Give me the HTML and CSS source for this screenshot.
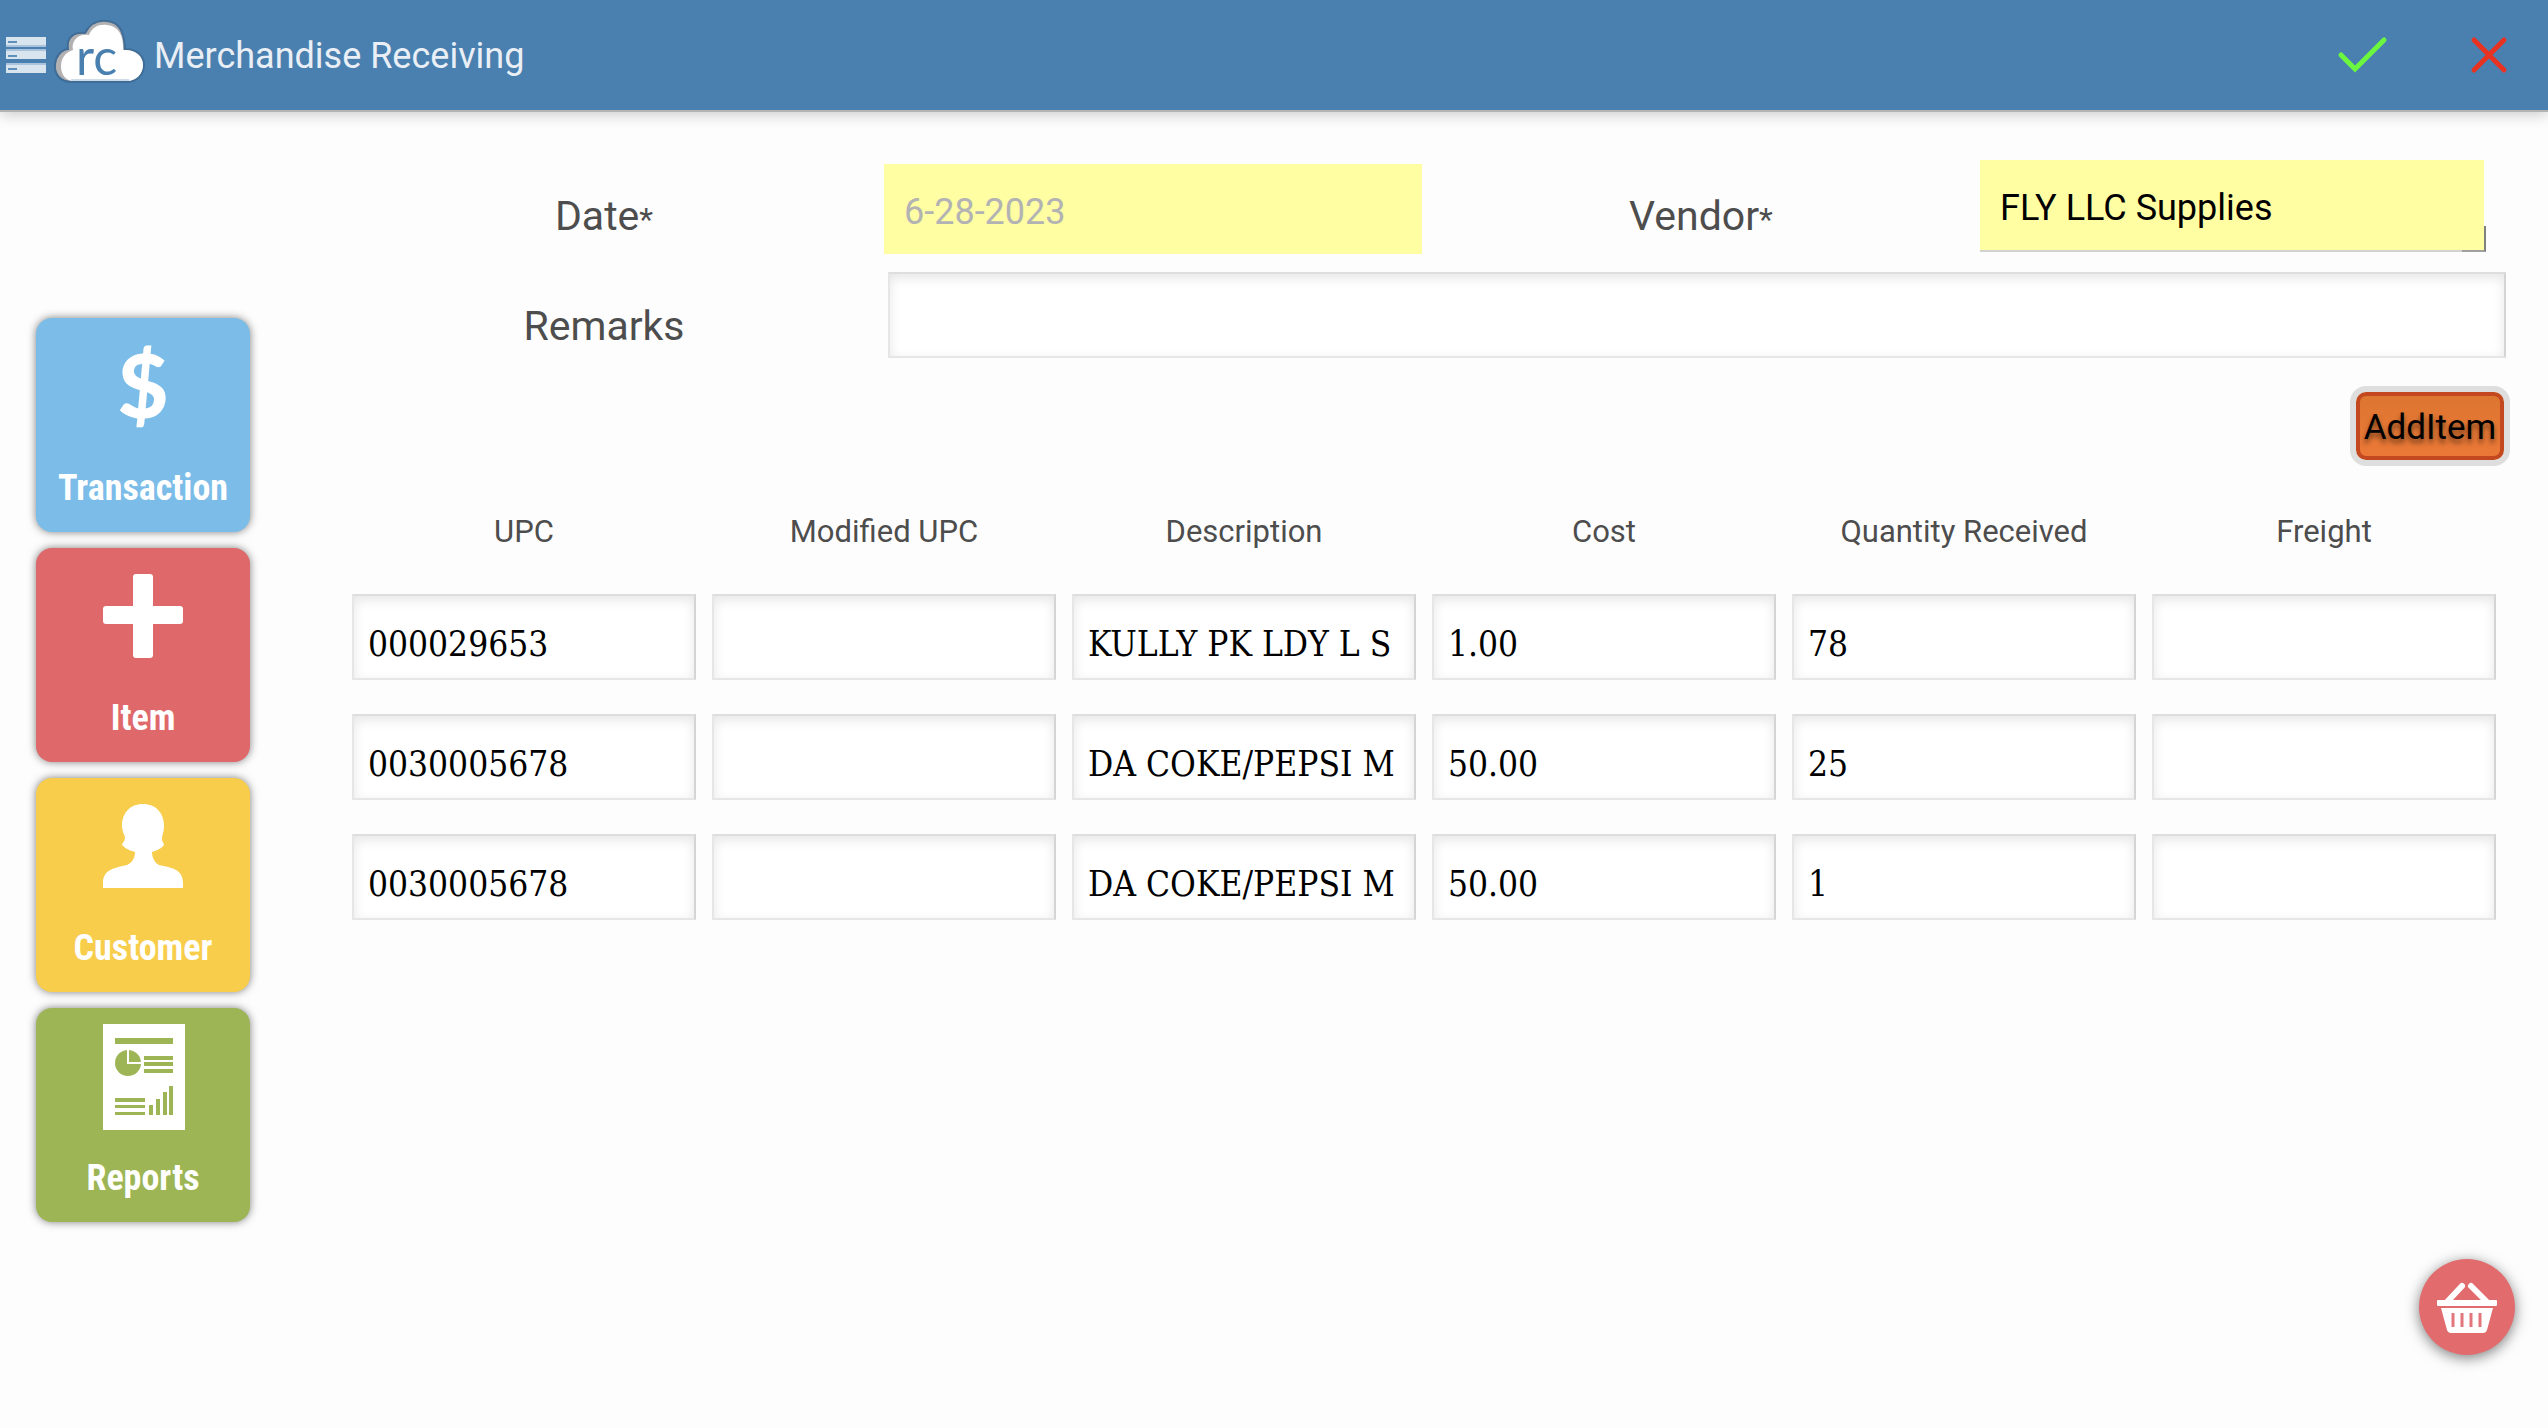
FILE: index.html
```html
<!DOCTYPE html>
<html lang="en">
<head>
<meta charset="utf-8">
<meta name="viewport" content="width=device-width, initial-scale=1">
<title>Merchandise Receiving</title>
<link rel="stylesheet" href="styles.css">
</head>
<body>
<header class="topbar">
  <button class="menu-button" type="button" aria-label="Menu">
    <svg width="40" height="36" viewBox="0 0 40 36" aria-hidden="true">
      <path fill="#a9c3dc" d="M0 8h40v2H0zM0 12h40v2H0zM0 26h40v2H0z"/>
      <path fill="#d8e5ef" d="M0 0h40v8H0zM0 14h40v8H0zM0 28h40v8H0z"/>
      <path fill="#5f90bc" d="M2 4h9v2H2zM2 18h9v2H2zM2 31h9v2H2z"/>
    </svg>
  </button>
  <svg class="logo" width="96" height="68" viewBox="0 0 96 68" role="img" aria-label="rc">
    <path fill="#b3b0b2" stroke="#3f6d97" stroke-width="2" d="M20 65C8 65 2 57 3 47c1-8 6-14 13-15C14 20 22 15 33 16 38 6 47 3 55 4c11 1 17 8 18 28 12 0 19 7 19 16 0 10-8 17-17 17z"/>
    <path fill="#fff" d="M22 64C13 64 9 57 9 49c0-8 5-14 12-16-2-9 5-17 16-15C40 10 47 7 55 8c11 1 17 10 16 25 12-1 20 6 20 15 0 9-7 16-16 16z"/>
    <path fill="#cfdce8" d="M19 62h58v2H19z"/>
    <text class="logo-text" x="24" y="58">rc</text>
  </svg>
  <h1 class="title">Merchandise Receiving</h1>
  <div class="topbar-actions">
    <button class="icon-button" type="button" aria-label="Save">
      <svg width="50" height="36" viewBox="0 0 50 36" aria-hidden="true"><path d="M3 18l14 14L46 3" fill="none" stroke="#6cf73f" stroke-width="5" stroke-linecap="round"/></svg>
    </button>
    <button class="icon-button" type="button" aria-label="Cancel">
      <svg width="38" height="38" viewBox="0 0 38 38" aria-hidden="true"><path d="M4 4l30 30M34 4L4 34" fill="none" stroke="#e83323" stroke-width="5" stroke-linecap="round"/></svg>
    </button>
  </div>
</header>

<div class="layout">
  <nav class="sidebar" aria-label="Main">
    <a class="tile tile-transaction" href="#transaction">
      <svg class="tile-icon" width="86" height="110" viewBox="0 0 86 110" aria-hidden="true"><text class="dollar" x="43" y="85">$</text></svg>
      <span>Transaction</span>
    </a>
    <a class="tile tile-item" href="#item">
      <svg class="tile-icon" width="86" height="110" viewBox="0 0 86 110" aria-hidden="true"><path fill="#fff" d="M36 11h14q3 0 3 3v29h27q3 0 3 3v12q0 3-3 3H53v31q0 3-3 3H36q-3 0-3-3V61H6q-3 0-3-3V46q0-3 3-3h27V14q0-3 3-3z"/></svg>
      <span>Item</span>
    </a>
    <a class="tile tile-customer" href="#customer">
      <svg class="tile-icon" width="86" height="110" viewBox="0 0 86 110" aria-hidden="true"><path fill="#fff" d="M43 11c13 0 21 9 21 22 0 6-2 9-2 13 0 3 2 4 2 6-3 4-7 5-12 7 0 6 3 11 7 13 13 3 24 4 24 18v5H3v-5c0-14 12-15 24-18 5-2 8-7 8-13-6-2-9-3-13-7 0-2 3-4 3-7 0-3-3-6-3-12 0-13 8-22 21-22z"/></svg>
      <span>Customer</span>
    </a>
    <a class="tile tile-reports" href="#reports">
      <svg class="tile-icon" width="86" height="110" viewBox="0 0 86 110" aria-hidden="true">
        <path fill="#fff" d="M3 1h82v106H3z"/>
        <path fill="#9db554" d="M15 15h58v6H15zM44 33h29v4H44zM44 39h29v4H44zM44 46h29v4H44zM15 75h30v4H15zM15 82h30v3H15zM15 89h30v3H15zM49 82h4v10h-4zM56 76h4v16h-4zM63 69h4v23h-4zM69 63h4v29h-4z"/>
        <circle cx="28" cy="40" r="13" fill="#9db554"/>
        <path d="M28 27v13h13" fill="none" stroke="#fff" stroke-width="2"/>
      </svg>
      <span>Reports</span>
    </a>
  </nav>

  <main class="content">
    <form>
      <div class="fields">
        <label class="label" for="date">Date<span class="star">*</span></label>
        <input class="required date" id="date" type="text" value="6-28-2023" disabled>
        <label class="label" for="vendor">Vendor<span class="star">*</span></label>
        <div class="vendor">
          <select class="required" id="vendor"><option>FLY LLC Supplies</option></select>
        </div>
        <label class="label" for="remarks">Remarks</label>
        <input class="box remarks" id="remarks" type="text">
      </div>
      <div class="actions"><button class="add" type="button">AddItem</button></div>
      <table class="items">
        <thead>
          <tr><th scope="col">UPC</th><th scope="col">Modified UPC</th><th scope="col">Description</th><th scope="col">Cost</th><th scope="col">Quantity Received</th><th scope="col">Freight</th></tr>
        </thead>
        <tbody>
          <tr>
            <td><input class="box" aria-label="UPC" value="000029653"></td>
            <td><input class="box" aria-label="Modified UPC"></td>
            <td><input class="box" aria-label="Description" value="KULLY PK LDY L S"></td>
            <td><input class="box" aria-label="Cost" value="1.00"></td>
            <td><input class="box" aria-label="Quantity Received" value="78"></td>
            <td><input class="box" aria-label="Freight"></td>
          </tr>
          <tr>
            <td><input class="box" aria-label="UPC" value="0030005678"></td>
            <td><input class="box" aria-label="Modified UPC"></td>
            <td><input class="box" aria-label="Description" value="DA COKE/PEPSI M"></td>
            <td><input class="box" aria-label="Cost" value="50.00"></td>
            <td><input class="box" aria-label="Quantity Received" value="25"></td>
            <td><input class="box" aria-label="Freight"></td>
          </tr>
          <tr>
            <td><input class="box" aria-label="UPC" value="0030005678"></td>
            <td><input class="box" aria-label="Modified UPC"></td>
            <td><input class="box" aria-label="Description" value="DA COKE/PEPSI M"></td>
            <td><input class="box" aria-label="Cost" value="50.00"></td>
            <td><input class="box" aria-label="Quantity Received" value="1"></td>
            <td><input class="box" aria-label="Freight"></td>
          </tr>
        </tbody>
      </table>
    </form>
  </main>
</div>

<button class="basket" type="button" aria-label="Basket">
  <svg width="64" height="54" viewBox="0 0 64 54" aria-hidden="true">
    <path d="M12 22L27 6M52 22L36 6" fill="none" stroke="#fff" stroke-width="6" stroke-linecap="round"/>
    <path fill="#fff" d="M3 20h58q1 0 1 1v4q0 1-1 1H3q-1 0-1-1v-4q0-1 1-1zM6 28h52l-6 22q-1 3-4 3H16q-3 0-4-3z"/>
    <path d="M18 33v14M27 33v14M36 33v14M45 33v14" stroke="#e3767a" stroke-width="3"/>
  </svg>
</button>
</body>
</html>
```
FILE: styles.css
```css
* {
  box-sizing: border-box;
}

body {
  margin: 0;
  min-height: 100vh;
  background: #fdfdfd;
  color: #4d4d4d;
  font-family: Roboto, "Liberation Sans", sans-serif;
}

button {
  padding: 0;
  border: 0;
  background: none;
  cursor: pointer;
}

svg {
  display: block;
  overflow: visible;
}

.topbar {
  display: flex;
  align-items: center;
  height: 112px;
  padding: 0 40px 0 6px;
  background: #4a80b0;
  border-bottom: 2px solid #b4b4b4;
  box-shadow: 0 2px 14px rgba(0, 0, 0, 0.22);
}

.logo {
  margin: 0 6px 8px 6px;
}

.logo-text {
  font-family: Lato, sans-serif;
  font-size: 50px;
  font-weight: 400;
  fill: #4a80b0;
}

.title {
  margin: 0;
  padding-top: 2px;
  color: #e9eff5;
  font-size: 36px;
  font-weight: 400;
}

.topbar-actions {
  display: flex;
  align-items: center;
  gap: 82px;
  margin-left: auto;
}

.layout {
  display: flex;
}

.sidebar {
  display: flex;
  flex: none;
  flex-direction: column;
  gap: 16px;
  width: 324px;
  padding: 206px 0 0 36px;
}

.tile {
  display: flex;
  flex-direction: column;
  align-items: center;
  width: 214px;
  height: 214px;
  padding-top: 15px;
  border-radius: 16px;
  box-shadow: 0 0 9px rgba(0, 0, 0, 0.5);
  color: #fff;
  font-family: "Roboto Condensed", Roboto, sans-serif;
  font-size: 36px;
  font-weight: 700;
  line-height: 42px;
  text-decoration: none;
}

.tile-icon {
  margin-bottom: 24px;
}

.tile-transaction { background: #7bbde8; }
.tile-item { background: #df686a; }
.tile-customer { background: #f7cd4b; }
.tile-reports { background: #9db554; }

.dollar {
  fill: #fff;
  font-family: Lato, sans-serif;
  font-size: 88px;
  font-weight: 900;
  text-anchor: middle;
}

.content {
  flex: 1;
  min-width: 0;
  padding-right: 36px;
}

.fields {
  display: grid;
  grid-template-columns: 560fr 538fr 558fr 506fr;
  grid-template-rows: 112px 108px;
  padding: 48px 26px 0 0;
}

.label {
  align-self: center;
  font-size: 41px;
  text-align: center;
}

.star {
  font-size: 32px;
}

.required {
  width: 100%;
  height: 90px;
  padding: 6px 20px 0;
  border: 0;
  border-radius: 0;
  background: #fffea3;
  color: #000;
  font-family: inherit;
  font-size: 36px;
  appearance: none;
}

.date {
  margin-top: 4px;
  color: #b3b3b3;
}

.vendor {
  position: relative;
  height: 92px;
  padding-right: 2px;
  border-bottom: 2px solid #d2d2d2;
}

.vendor::after {
  position: absolute;
  right: 0;
  bottom: -2px;
  width: 22px;
  height: 24px;
  border-right: 2px solid #808080;
  border-bottom: 2px solid #a0a0a0;
  content: "";
}

.box {
  display: block;
  width: 100%;
  height: 86px;
  padding: 14px 14px 0;
  border: 2px solid #e6e6e6;
  border-top-color: #dedede;
  border-right-color: #d4d4d4;
  border-radius: 0;
  background: #fff;
  box-shadow: inset 0 4px 12px rgba(0, 0, 0, 0.1);
  color: #000;
  font-family: "DejaVu Serif Condensed", "DejaVu Serif", serif;
  font-size: 35px;
}

.remarks {
  grid-column: 2 / -1;
  width: auto;
  margin: 0 -20px 0 4px;
}

.actions {
  display: flex;
  justify-content: flex-end;
  padding: 6px 2px 19px 0;
}

.add {
  width: 160px;
  height: 80px;
  padding-top: 3px;
  border: 6px solid #dedede;
  border-radius: 16px;
  background: linear-gradient(#dc762f, #ec7838);
  box-shadow: inset 0 0 0 4px #c4481f;
  color: #000;
  font-family: inherit;
  font-size: 35px;
  text-shadow: 0 4px 5px rgba(0, 0, 0, 0.5);
}

.items {
  width: calc(100% - 12px);
  margin-left: 12px;
  border-spacing: 16px 0;
  table-layout: fixed;
}

.items th {
  height: 92px;
  padding: 0;
  font-size: 31px;
  font-weight: 400;
}

.items td {
  height: 120px;
  padding: 0;
}

.basket {
  position: fixed;
  right: 33px;
  bottom: 73px;
  display: grid;
  place-items: center;
  width: 96px;
  height: 96px;
  border-radius: 50%;
  background: #e16b6d;
  box-shadow: 0 3px 14px rgba(0, 0, 0, 0.5);
}
```
